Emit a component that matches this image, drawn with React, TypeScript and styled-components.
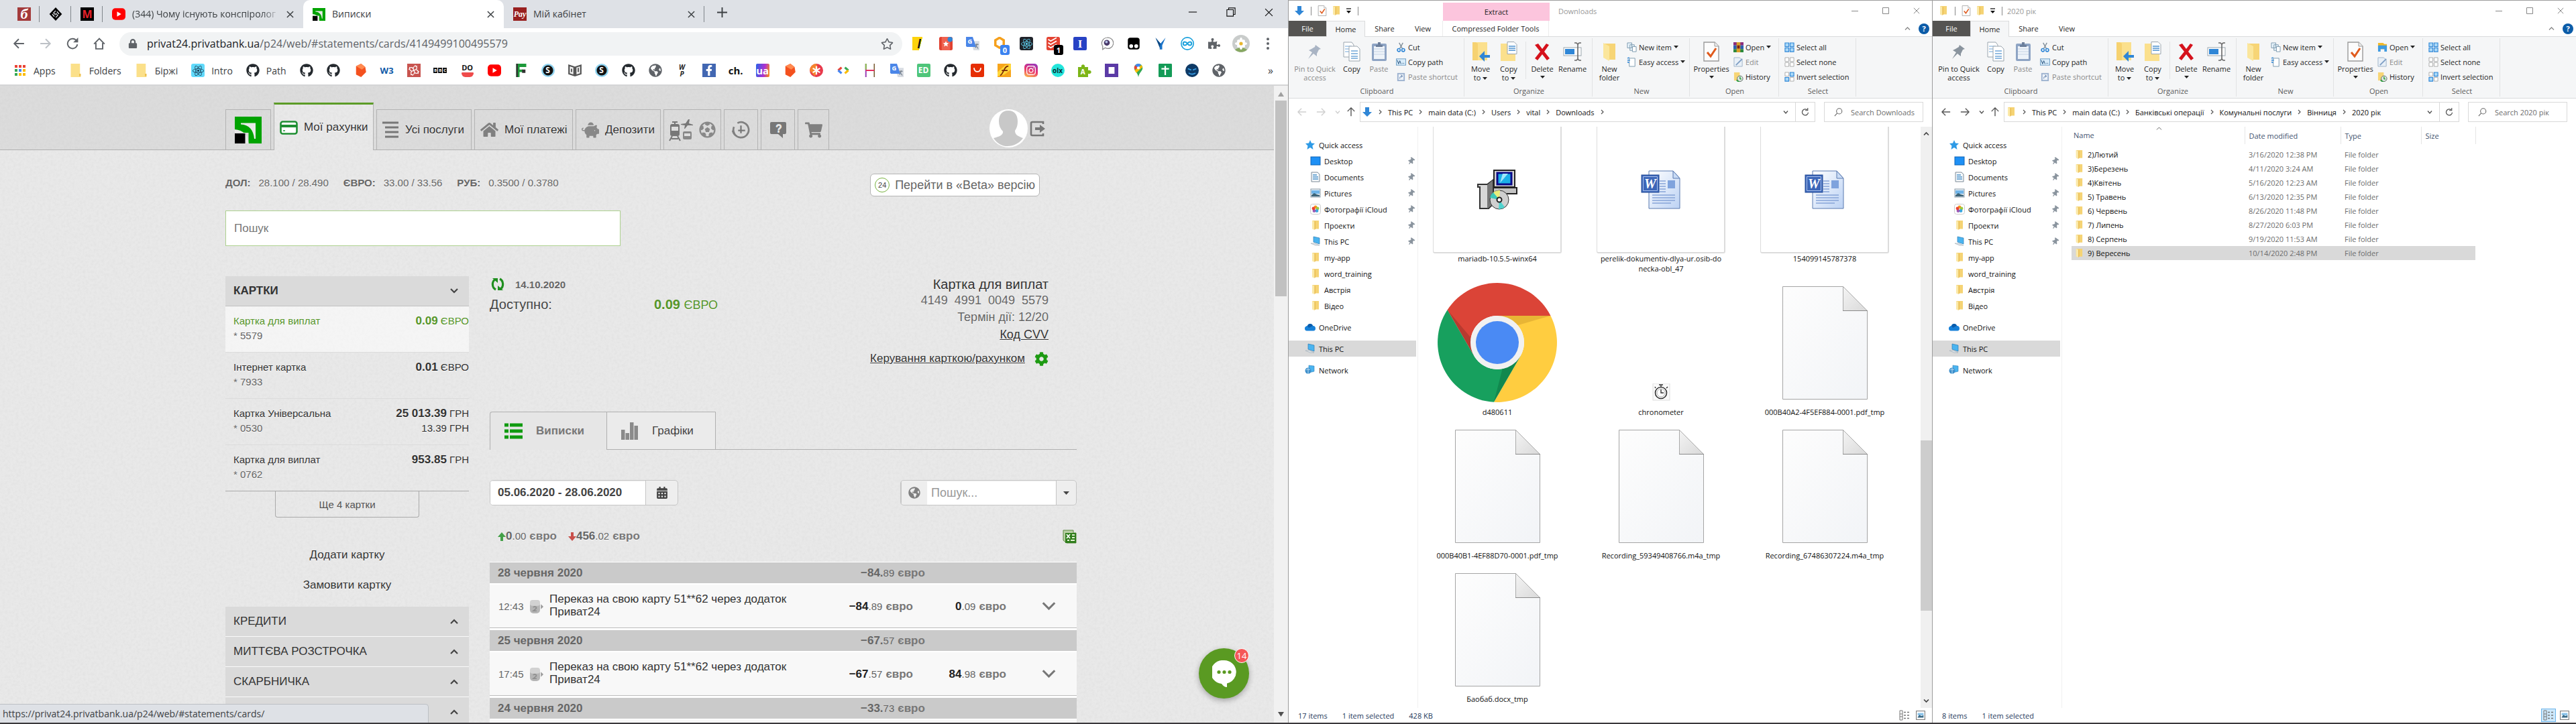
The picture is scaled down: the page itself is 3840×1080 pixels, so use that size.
import React from 'react';
import styled, { createGlobalStyle, css } from 'styled-components';
import { FaGithub, FaReact, FaFacebookF, FaInstagram, FaGlobeAmericas, FaCog, FaPuzzlePiece, FaRegStar, FaLock, FaCalendarAlt, FaThumbtack, FaFutbol, FaHome, FaPiggyBank, FaShoppingCart } from 'react-icons/fa';

const ui = '"Open Sans", "Noto Sans", sans-serif';
const web = '"Liberation Sans", Arial, sans-serif';

const grain = (seed: number) =>
  `url("data:image/svg+xml,%3Csvg xmlns='http://www.w3.org/2000/svg' width='300' height='300'%3E%3Cfilter id='n'%3E%3CfeTurbulence type='fractalNoise' baseFrequency='0.25' numOctaves='3' seed='${seed}' stitchTiles='stitch'/%3E%3CfeColorMatrix values='0 0 0 0 0.4 0 0 0 0 0.4 0 0 0 0 0.4 0.16 0 0 0 -0.05'/%3E%3C/filter%3E%3Crect width='300' height='300' filter='url(%23n)'/%3E%3C/svg%3E")`;

const GlobalStyle = createGlobalStyle`
  * { box-sizing: border-box; }
  body { margin: 0; background: #fff; font-family: ${ui}; }
  button { font: inherit; color: inherit; background: none; border: 0; padding: 0; margin: 0; cursor: pointer; }
  a { color: inherit; text-decoration: none; }
  input { font: inherit; color: inherit; outline: 0; margin: 0; }
  svg { display: block; flex: none; }
  ul { list-style: none; margin: 0; padding: 0; }
  h1, h2, p { margin: 0; font: inherit; }
`;

const Desktop = styled.div`
  display: grid;
  grid-template-columns: 2fr 1fr 1fr;
  height: 100vh;
  overflow: hidden;
  border-bottom: 2px solid #3a383b;
`;

/* ---------- shared glyphs ---------- */

type SvgProps = { w: number; h?: number; box?: string; children: React.ReactNode };
const G = ({ w, h, box, children }: SvgProps) => (
  <svg width={w} height={h ?? w} viewBox={box ?? '0 0 16 16'} fill="none" aria-hidden="true">{children}</svg>
);

const Folder = ({ s = 16 }: { s?: number }) => (
  <G w={s}>
    <path d="M3 1h10v12.5H6L3 12z" fill="#f5d374" />
    <path d="M3 1l3.5 1.6V15L3 13.4z" fill="#fbe9a9" />
    <path d="M6.5 2.6L8 2v11.5L6.5 15z" fill="#e9bd55" />
  </G>
);
const Cross = ({ s = 12, c = '#3c4043', t = 1.6 }: { s?: number; c?: string; t?: number }) => (
  <G w={s} box="0 0 12 12"><path d="M1 1l10 10M11 1L1 11" stroke={c} strokeWidth={t} /></G>
);
const DownArrow = () => (
  <G w={16}><path d="M5 1h6v7h4l-7 7-7-7h4z" fill="#2f86d6" /></G>
);
const CheckDoc = ({ w = 14, h = 16 }: { w?: number; h?: number }) => (
  <G w={w} h={h} box="0 0 24 30">
    <path d="M1 1h16l6 6v22H1z" fill="#fcfcfc" stroke="#9a9a9a" strokeWidth="1.4" />
    <path d="M17 1v6h6" stroke="#9a9a9a" fill="#eee" />
    <path d="M6 16l5 6 8-12" stroke="#e05a1c" strokeWidth="3" />
  </G>
);
const Monitor = () => (
  <G w={16}>
    <path d="M5 1l9 2v9l-9-3z" fill="#4ab4f0" stroke="#2b7db5" strokeWidth=".7" />
    <path d="M1 11l7 3 6 0-7-3z" fill="#dfe5ea" stroke="#9aa7b1" strokeWidth=".6" />
  </G>
);

/* ---------- browser ---------- */

const Browser = styled.section`
  display: flex;
  flex-direction: column;
  min-width: 0;
  min-height: 0;
  position: relative;
  background: #fff;
  color: #3c4043;
  font-size: 14px;
`;
const TabStrip = styled.div`
  display: flex;
  align-items: stretch;
  height: 42px;
  padding-left: 12px;
  background: #dee1e6;
`;
const Tab = styled.div<{ $active?: boolean; $pinned?: boolean; $rule?: boolean }>`
  display: flex;
  align-items: center;
  gap: 10px;
  width: ${p => (p.$pinned ? 47 : 299)}px;
  padding: 0 14px;
  ${p => p.$active && css`background: #fff; border-radius: 10px 10px 0 0;`}
  ${p => p.$rule && css`background: linear-gradient(#80868b, #80868b) right center / 1px 24px no-repeat;`}
`;
const TabTitle = styled.span<{ $fade?: boolean }>`
  flex: 1;
  min-width: 0;
  overflow: hidden;
  white-space: nowrap;
  line-height: 20px;
  ${p => p.$fade && css`-webkit-mask-image: linear-gradient(90deg, #000 88%, transparent);`}
`;
const StripButton = styled.button<{ $w: number; $push?: boolean }>`
  display: flex;
  align-items: center;
  justify-content: center;
  width: ${p => p.$w}px;
  height: 36px;
  margin-left: ${p => (p.$push ? 'auto' : 0)};
`;
const Chip = styled.span<{ $bg?: string; $c?: string; $s?: number; $r?: number; $serif?: boolean; $i?: boolean; $col?: boolean }>`
  display: inline-flex;
  flex: none;
  flex-direction: ${p => (p.$col ? 'column' : 'row')};
  align-items: center;
  justify-content: center;
  width: 20px;
  height: 20px;
  border-radius: ${p => p.$r ?? 0}px;
  background: ${p => p.$bg ?? 'transparent'};
  color: ${p => p.$c ?? '#fff'};
  font: ${p => (p.$i ? 'italic ' : '')}bold ${p => p.$s ?? 14}px/1 ${p => (p.$serif ? '"Liberation Serif", serif' : ui)};
  white-space: nowrap;
`;
const Toolbar = styled.div`
  display: flex;
  align-items: center;
  gap: 20px;
  height: 46px;
  padding: 0 20px 0 18px;
`;
const ToolButton = styled.button`
  display: flex;
  align-items: center;
  justify-content: center;
  width: 20px;
  height: 20px;
  flex: none;
  position: relative;
`;
const Badge = styled.span<{ $bg: string }>`
  position: absolute;
  left: 11px;
  top: 12px;
  min-width: 14px;
  border-radius: 3px;
  background: ${p => p.$bg};
  color: #fff;
  font: bold 11px/15px ${ui};
  text-align: center;
`;
const Omnibox = styled.div`
  display: flex;
  align-items: center;
  flex: 1;
  height: 35px;
  margin-right: -5px;
  padding: 0 13px;
  border-radius: 18px;
  background: #f1f3f4;
  color: #5f6368;
  font-size: 16px;
`;
const Address = styled.span`
  flex: 1;
  margin-left: 14px;
  white-space: nowrap;
  b { font-weight: 400; color: #202124; }
`;
const Bookmarks = styled.nav`
  display: flex;
  align-items: center;
  gap: 20px;
  height: 38px;
  padding: 0 22px 4px 20px;
  overflow: hidden;
`;
const Bookmark = styled.a`
  display: flex;
  align-items: center;
  gap: 10px;
  white-space: nowrap;
  flex: none;
`;
const More = styled.button`
  margin-left: auto;
  font-size: 16px;
`;
const Smile = styled.i`
  width: 18px;
  height: 7px;
  margin-top: 2px;
  border-radius: 2px 2px 9px 9px;
  background: #ef4b4b;
`;
const Block = styled.i`
  padding: 1px;
  margin-right: 1px;
  background: #111;
  font-style: normal;
`;

const RedStone = () => <G w={20}><path d="M3 3l6-3 5 4 1 6-6 6-6-3z" fill="#f4511e" /><path d="M9 0l5 4-4 3-7-4z" fill="#ff8a50" /></G>;
const YouTube = () => <G w={20}><rect y="1" width="16" height="14" rx="4" fill="#f00" /><path d="M6 5l5 3-5 3z" fill="#fff" /></G>;
const Translate = () => (
  <G w={20}>
    <path d="M6 5h10v11H9z" fill="#d8dce2" />
    <path d="M0 0h8l4 12H1L0 11z" fill="#4b86e8" />
    <text x="2" y="8" fontSize="7.5" fontWeight="bold" fill="#fff" fontFamily={ui}>G</text>
    <path d="M11 9h4M13 8v1c0 2-1 3-2 4M11.500 10l3 4" stroke="#6b7785" strokeWidth=".9" />
  </G>
);
const Globe = () => <FaGlobeAmericas size={20} color="#5f6368" />;
const Hub = () => <FaGithub size={20} color="#24292e" />;
const ReactTile = ({ bg, c }: { bg: string; c: string }) => <Chip $bg={bg} $r={3} $c={c}><FaReact size={17} /></Chip>;
const SMark = () => <Chip $bg="radial-gradient(circle, #111 0 7px, #8fd3f0 8px)" $r={10} $s={12}>S</Chip>;
const Green24 = ({ s }: { s: number }) => (
  <svg width={s} height={s} viewBox="0 0 40 40" aria-hidden="true">
    <path d="M0 0h40v40H20.500V24H0z" fill="#00a300" />
    <path d="M9 9.500h22V33h-2C28 20 21 12 9 11.500z" fill="#e9e9e9" />
    <path d="M0 19c13 1 20 9 20.500 21H15V24H0z" fill="#e9e9e9" />
    <path d="M0 25h15.500v15H0z" fill="#000" />
  </svg>
);
const Spiral = () => <G w={20}><rect width="16" height="16" fill="#c8544f" /><path d="M8 8c-2-3 0-6 4-5M8 8c3-2 6 0 5 4M8 8c2 3 0 6-4 5M8 8c-3 2-6 0-5-4M8 8C7 4 4 3 2 7M8 8c4-1 5-4 1-6M8 8c1 4 4 5 6 1M8 8c-4 1-5 4-1 6" stroke="#fff" strokeWidth=".9" /></G>;

const bookmarkIcons: React.ReactNode[] = [
  <Hub />,
  <Hub />,
  <RedStone />,
  <Chip $c="#0f5aa8" $s={13}>W3</Chip>,
  <Spiral />,
  <Chip $s={6}><Block>B</Block><Block>B</Block><Block>C</Block></Chip>,
  <Chip $c="#111" $s={11} $col>DO<Smile /></Chip>,
  <YouTube />,
  <G w={20}><path d="M2 0h12v4H6v3h4v3H6v6H2z" fill="#1d9a3a" /><path d="M2 0h2v16H2zM9 7h4v4H9z" fill="#333" /></G>,
  <SMark />,
  <G w={20}><path d="M1 2l6 2v10l-6-2zM15 2L9 4v10l6-2zM8 4v11" fill="#f5f5f5" stroke="#555" strokeWidth="1.800" /><path d="M4 6v4M12 5v5" stroke="#555" strokeWidth="1.500" /></G>,
  <SMark />,
  <Hub />,
  <Globe />,
  <Chip $c="#222" $s={10} $i $col><span>W</span><span>P</span></Chip>,
  <Chip $bg="#4267b2"><FaFacebookF size={16} /></Chip>,
  <Chip $c="#111" $s={15}>ch.</Chip>,
  <Chip $bg="linear-gradient(100deg,#2864e8,#b02fd0 60%,#ff9800)" $r={2} $s={15}>ua</Chip>,
  <RedStone />,
  <G w={20}><circle cx="8" cy="8" r="8" fill="#e83a4c" /><path d="M0 8a8 8 0 0 1 8-8l2 8-4 7z" fill="#f5852c" /><path d="M8 3v10M3.700 5.500l8.600 5M12.300 5.500l-8.600 5" stroke="#fff" strokeWidth="1.800" /></G>,
  <G w={20}><path d="M6 4.500L2 8" stroke="#ea4335" strokeWidth="2.600" /><path d="M2 8l4 3.500" stroke="#4285f4" strokeWidth="2.600" /><path d="M10 4.500L14 8" stroke="#34a853" strokeWidth="2.600" /><path d="M14 8l-4 3.500" stroke="#fbbc05" strokeWidth="2.600" /></G>,
  <G w={20}><path d="M3 0v16" stroke="#9b3fb5" strokeWidth="1.600" /><path d="M13 0v16" stroke="#7a5a30" strokeWidth="1.200" /><path d="M3 8h10" stroke="#e53060" strokeWidth="1.600" /><path d="M3 0v7" stroke="#8bc34a" strokeWidth="1.600" /></G>,
  <Translate />,
  <Chip $bg="#4fc57a" $r={2} $s={12}>ED</Chip>,
  <Hub />,
  <G w={20}><rect width="16" height="16" rx="2" fill="#e62e04" /><path d="M4 5c0 6 8 6 8 0" stroke="#fff" strokeWidth="1.500" /></G>,
  <G w={20}><rect width="16" height="16" fill="#f7a51c" /><path d="M0 10L9 2l7-2v7l-8 6-8 2z" fill="#ffd83a" /><path d="M3 14C7 13 8 2 13 3M5 8h7" stroke="#7b2a0a" strokeWidth="1.400" /></G>,
  <Chip $bg="linear-gradient(20deg,#fdc44a,#e8316f 50%,#8a3ac8)" $r={5}><FaInstagram size={16} /></Chip>,
  <Chip $bg="#23e5db" $r={10} $c="#0a2f35" $s={10}>olx</Chip>,
  <G w={20}><path d="M0 4h4c-1-4 5-4 4 0h4v4c5-1 5 5 0 4v4H0z" fill="#7cb518" /><text x="3" y="13" fontSize="8" fontWeight="bold" fill="#fff" fontFamily={ui}>A</text></G>,
  <G w={20}><rect width="16" height="16" fill="#5b3aa6" /><rect x="4.500" y="4" width="7" height="8" fill="#fff" /></G>,
  <G w={20}><path d="M8 0a5 5 0 0 0-5 5c0 4 4 5 5 11 1-6 5-7 5-11a5 5 0 0 0-5-5z" fill="#34a853" /><path d="M8 0a5 5 0 0 0-4 2l4 3 3-4z" fill="#4285f4" /><path d="M4 2a5 5 0 0 0-.5 5L8 5z" fill="#ea4335" /><path d="M11.500 1.500L3.500 8l2 3L13 4z" fill="#fbbc04" /><circle cx="8" cy="5" r="1.700" fill="#fff" /></G>,
  <G w={20}><rect width="16" height="16" rx="1" fill="#149b57" /><path d="M8 2.500v11M3.500 6h9" stroke="#fff" strokeWidth="1.800" /></G>,
  <G w={20}><circle cx="8" cy="8" r="8" fill="#0e3a66" /><path d="M3 6l4 1.500M13 6L9 7.500M4 11c2 2 6 2 8 0" stroke="#39a0e8" strokeWidth="1.400" /></G>,
  <Globe />,
];

const extensionIcons: { n: string; i: React.ReactNode }[] = [
  { n: 'Notes', i: <Chip $bg="linear-gradient(105deg,#fdd30c 60%,transparent 61%)" $c="#111" $i $s={17}>l</Chip> },
  { n: 'Star list', i: <G w={20}><rect width="16" height="16" rx="2" fill="#e0402f" /><rect x="3" y="0" width="10" height="16" fill="#ef6250" /><path d="M8 5l1 2.200 2.400.2L9.600 9l.6 2.500L8 10.200 5.800 11.500 6.400 9 4.600 7.400 7 7.200z" fill="#fff" /><circle cx="13" cy="3" r="3" fill="#2f86d6" /></G> },
  { n: 'Translate', i: <Translate /> },
  { n: 'Cube', i: <><G w={20}><path d="M8 1l5 3v6l-5 3-5-3V4z" stroke="#f5a01d" strokeWidth="2.800" /></G><Badge $bg="#3b82f0">0</Badge></> },
  { n: 'React tools', i: <ReactTile bg="#20232a" c="#61dafb" /> },
  { n: 'Tasks', i: <><G w={20}><rect width="16" height="16" rx="2" fill="#e44332" /><path d="M2 3l3 2 7-4M2 7l3 2 7-4M2 11l3 2 7-4" stroke="#fff" strokeWidth="1.400" /></G><Badge $bg="#000">1</Badge></> },
  { n: 'Reader', i: <Chip $bg="#2742c4" $r={2} $serif $s={17}>I</Chip> },
  { n: 'Chat', i: <G w={20}><path d="M8 1a6.500 6.500 0 1 1-2 12l-3 2V11A6.500 6.500 0 0 1 8 1z" fill="#fff" stroke="#888" /><circle cx="8" cy="7" r="3.500" fill="#4a3a6a" /><circle cx="7.500" cy="6" r="1.500" fill="#b7c4e8" /></G> },
  { n: 'Scripts', i: <G w={20}><rect x="1" y="1" width="14" height="14" rx="3" fill="#000" /><circle cx="5" cy="11" r="2.300" fill="#fff" /><circle cx="11" cy="11" r="2.300" fill="#fff" /></G> },
  { n: 'Pin', i: <G w={20}><path d="M2 1l6 7 6-7-4 9v5H7v-5z" fill="#1a73c8" /><path d="M2 1l6 7-1 5z" fill="#0c4a86" /></G> },
  { n: 'Loop', i: <G w={20}><circle cx="8" cy="8" r="7.300" stroke="#1ba1dc" strokeWidth="1.300" /><path d="M8 8c-2-3-5-2.500-5 0s3 3 5 0 5-2.500 5 0-3 3-5 0z" stroke="#1ba1dc" strokeWidth="1.600" /></G> },
  { n: 'Extensions', i: <FaPuzzlePiece size={18} color="#5f6368" /> },
  { n: 'Profile', i: <svg width="26" height="26" viewBox="0 0 26 26" aria-hidden="true"><circle cx="13" cy="13" r="13" fill="#c9cccb" /><path d="M4 22c6-4 12-4 18 0-5 5-13 5-18 0z" fill="#87a861" /><g fill="#fff"><ellipse cx="13" cy="8" rx="2" ry="4" /><ellipse cx="13" cy="18" rx="2" ry="4" /><ellipse cx="8" cy="13" rx="4" ry="2" /><ellipse cx="18" cy="13" rx="4" ry="2" /><circle cx="9.500" cy="9.500" r="2.500" /><circle cx="16.500" cy="9.500" r="2.500" /><circle cx="9.500" cy="16.500" r="2.500" /><circle cx="16.500" cy="16.500" r="2.500" /></g><circle cx="13" cy="13" r="2.600" fill="#e8b62c" /></svg> },
  { n: 'Menu', i: <G w={20}><g fill="#5f6368"><circle cx="8" cy="2.500" r="1.600" /><circle cx="8" cy="8" r="1.600" /><circle cx="8" cy="13.500" r="1.600" /></g></G> },
];

/* ---------- bank page ---------- */

const Viewport = styled.div`
  display: flex;
  flex: 1;
  min-height: 0;
  border-top: 2px solid #d4d5d6;
`;
const Page = styled.main`
  flex: 1;
  min-width: 0;
  overflow: hidden;
  background: #e9e9e9 ${grain(4)};
  color: #333;
  font-family: ${web};
  font-size: 17px;
  text-shadow: 0 1px 0 rgba(255, 255, 255, 0.8);
`;
const Scroll = styled.div`
  display: flex;
  flex-direction: column;
  align-items: center;
  width: 21px;
  padding: 9px 0;
  background: #f1f1f1;
`;
const Thumb = styled.div`
  width: 17px;
  height: 292px;
  margin: 6px 0 auto;
  background: #c1c1c1;
`;
const SiteHeader = styled.header`
  display: flex;
  align-items: flex-end;
  gap: 4px;
  height: 96px;
  padding: 0 340px 0 336px;
  border-bottom: 1px solid #b0b0b0;
  background: #dcdcdc ${grain(9)};
`;
const SiteTab = styled.a<{ $w: number; $active?: boolean; $tight?: boolean }>`
  display: flex;
  align-items: center;
  justify-content: ${p => (p.$tight ? 'center' : 'flex-start')};
  gap: 9px;
  width: ${p => p.$w}px;
  height: 60px;
  padding: ${p => (p.$tight ? 0 : '0 0 0 8px')};
  border: 1px solid #b3b3b3;
  border-bottom: 0;
  white-space: nowrap;
  ${p => p.$active && css`
    height: 71px;
    margin-bottom: -1px;
    border-top: 3px solid #5c9c27;
    background: #e9e9e9 ${grain(4)};
  `}
`;
const Account = styled.div`
  display: flex;
  align-items: center;
  gap: 3px;
  margin: 0 0 3px auto;
`;
const Content = styled.div`
  padding: 35px 294px 0 336px;
`;
const Rates = styled.div`
  display: flex;
  align-items: flex-start;
  justify-content: space-between;
  padding-right: 55px;
`;
const RateList = styled.dl`
  display: flex;
  margin: 0;
  font-size: 15px;
  line-height: 28px;
  color: #666;
  dt { font-weight: 700; margin-right: 12px; }
  dd { margin: 0 22px 0 0; }
`;
const BetaButton = styled.button`
  display: flex;
  align-items: center;
  gap: 8px;
  height: 34px;
  padding: 0 6px;
  border: 1px solid #b5b5b5;
  border-radius: 6px;
  background: #fff;
  color: #666;
  font-size: 18px;
`;
const Ring = styled.span`
  display: flex;
  align-items: center;
  justify-content: center;
  width: 22px;
  height: 22px;
  border: 1px solid #79b341;
  border-radius: 50%;
  color: #444;
  font-size: 11px;
`;
const BigSearch = styled.input`
  display: block;
  width: 589px;
  height: 53px;
  margin: 21px 0 45px;
  padding: 0 12px;
  border: 1px solid #add18f;
  background: #fff;
  font-size: 17px;
  &::placeholder { color: #777; }
`;
const Columns = styled.div`
  display: grid;
  grid-template-columns: 363px 1fr;
  gap: 31px;
`;
const SideHead = styled.button<{ $open?: boolean }>`
  display: flex;
  align-items: center;
  justify-content: space-between;
  width: 100%;
  height: 45px;
  padding: 0 16px 0 12px;
  border-bottom: 1px solid ${p => (p.$open ? '#c0c0c0' : '#fafafa')};
  background: #dadada;
  font-size: 17px;
  font-weight: ${p => (p.$open ? 700 : 400)};
  svg:only-child { margin-left: auto; }
`;
const CardRow = styled.li<{ $on?: boolean }>`
  display: flex;
  justify-content: space-between;
  height: 69px;
  padding: 11px 0 0 12px;
  border-bottom: 1px solid #dcdcdc;
  font-size: 15px;
  line-height: 22px;
  ${p => p.$on && css`background: rgba(255, 255, 255, 0.55); color: #56962a;`}
  &:last-child { border-color: #aaa; }
  span { color: #666; }
`;
const CardSum = styled.div`
  text-align: right;
  b { font-size: 17px; }
`;
const MoreCards = styled.button`
  display: block;
  width: 215px;
  height: 39px;
  margin: 0 auto 33px;
  border: 1px solid #aaa;
  border-top: 0;
  border-radius: 0 0 4px 4px;
  color: #555;
  font-size: 15px;
`;
const CardLink = styled.a`
  display: block;
  line-height: 45px;
  text-align: center;
`;
const SideSections = styled.div`
  margin-top: 10px;
`;
const Info = styled.div`
  display: flex;
  justify-content: space-between;
  min-height: 202px;
  padding-right: 42px;
`;
const Updated = styled.div`
  display: flex;
  align-items: center;
  gap: 16px;
  height: 24px;
  padding-left: 2px;
  font-size: 15px;
  font-weight: 700;
  color: #666;
`;
const Available = styled.div`
  display: grid;
  grid-template-columns: 245px auto;
  font-size: 20px;
  line-height: 36px;
  color: #444;
  strong, span { color: #56962a; }
  span { font-size: 18px; }
`;
const CardInfo = styled.div`
  display: flex;
  flex-direction: column;
  align-items: flex-end;
  font-size: 18px;
  line-height: 26px;
  color: #666;
  h2 { font-size: 20px; line-height: 24px; color: #333; }
  p:first-of-type { line-height: 24px; white-space: pre; }
  a { color: #333; text-decoration: underline; }
`;
const Manage = styled.div`
  display: flex;
  align-items: center;
  gap: 14px;
  margin-top: 10px;
  font-size: 17px;
`;
const ViewTabs = styled.div`
  display: flex;
  height: 57px;
  background: linear-gradient(#b0b0b0, #b0b0b0) bottom / 100% 1px no-repeat;
`;
const ViewTab = styled.button<{ $on?: boolean; $w: number }>`
  display: flex;
  align-items: center;
  gap: 20px;
  width: ${p => p.$w}px;
  padding-left: 21px;
  border: 1px solid #b0b0b0;
  background: #ebebeb;
  color: ${p => (p.$on ? '#777' : '#444')};
  font-weight: ${p => (p.$on ? 700 : 400)};
  ${p => p.$on && css`border-width: 1px 0 0 1px; border-radius: 4px 0 0 0; background: #e6e6e6;`}
`;
const Filters = styled.div`
  display: flex;
  justify-content: space-between;
  margin: 45px 0 34px;
`;
const InputGroup = styled.div`
  display: flex;
  height: 38px;
  border: 1px solid #c6c6c6;
  border-radius: 5px;
  background: #eee;
  overflow: hidden;
`;
const GroupField = styled.input<{ $w: number; $bold?: boolean }>`
  width: ${p => p.$w}px;
  border: 0;
  padding: 0 ${p => (p.$bold ? 11 : 6)}px;
  background: #fff;
  box-shadow: inset 0 1px 1px rgba(0, 0, 0, 0.08);
  color: #444;
  font-weight: ${p => (p.$bold ? 700 : 400)};
  font-size: ${p => (p.$bold ? 17 : 18)}px;
  &::placeholder { color: #999; }
`;
const GroupButton = styled.button<{ $w: number }>`
  display: flex;
  align-items: center;
  justify-content: center;
  width: ${p => p.$w}px;
  border-left: 1px solid #c6c6c6;
`;
const Totals = styled.div`
  display: flex;
  align-items: center;
  gap: 17px;
  height: 24px;
  margin-bottom: 26px;
  padding-left: 12px;
  > svg { margin-left: auto; }
`;
const Total = styled.span`
  display: flex;
  align-items: center;
`;
const Money = styled.span<{ $dark?: boolean }>`
  white-space: nowrap;
  color: #777;
  b { color: ${p => (p.$dark ? '#222' : '#666')}; }
  small { font-size: 15px; color: #666; }
  strong { margin-left: 5px; }
`;
const Ledger = styled.table`
  width: 100%;
  table-layout: fixed;
  border-collapse: separate;
  border-spacing: 0;
  border-top: 1px solid #fff;
  text-shadow: none;
  td, th { padding: 0; text-align: left; }
`;
const DayRow = styled.tr`
  th, td {
    height: 33px;
    border-bottom: 2px solid #fff;
    background: #cacaca;
    color: #666;
  }
  th { padding-left: 12px; }
  td { padding-left: 42px; }
`;
const EntryRow = styled.tr`
  td {
    height: 68px;
    border-bottom: 3px solid #fff;
    background: #f8f8f8;
    box-shadow: inset 0 -1px 0 #bdbdbd;
    line-height: 19px;
  }
  td:first-child { padding-left: 13px; font-size: 15px; color: #666; }
  td:nth-child(3) { padding: 0 20px 3px 0; }
  td:nth-child(4), td:nth-child(5) { text-align: right; }
  td:nth-child(6) { padding-left: 53px; }
`;
const ChatButton = styled.button`
  position: absolute;
  right: 58px;
  bottom: 36px;
  display: flex;
  align-items: center;
  justify-content: center;
  width: 75px;
  height: 75px;
  border-radius: 50%;
  background: #5a9a22;
  box-shadow: 0 3px 8px rgba(0, 0, 0, 0.3);
`;
const ChatCount = styled.span`
  position: absolute;
  right: 0;
  top: 0;
  width: 22px;
  height: 22px;
  border: 1px solid #fff;
  border-radius: 50%;
  background: #f55757;
  color: #fff;
  font: 13px/20px ${ui};
  text-align: center;
`;
const StatusBubble = styled.div`
  position: absolute;
  left: 0;
  bottom: 0;
  width: 639px;
  height: 28px;
  padding-left: 4px;
  border: 1px solid #bcc0c5;
  border-width: 1px 1px 0 0;
  border-radius: 0 5px 0 0;
  background: #dee1e6;
  color: #3c4043;
  font-size: 14px;
  line-height: 27px;
`;

const Chevron = ({ up, s = 12 }: { up?: boolean; s?: number }) => (
  <G w={s} box="0 0 12 12"><path d={up ? 'M1 9l5-5 5 5' : 'M1 3l5 5 5-5'} stroke={s > 14 ? '#777' : '#444'} strokeWidth={s > 14 ? 1.8 : 2.2} /></G>
);
const CoinOut = () => (
  <G w={20}>
    <rect x="0" y="2" width="12" height="14" rx="4" fill="#b5b5b5" />
    <rect x="0" y="0" width="12" height="7" rx="3" fill="#d2d2d2" />
    <path d="M4 9c1-2 4-1 3.500 1L4 13h4" stroke="#8e8e8e" strokeWidth="1.300" />
    <path d="M13 5l3 3-3 3z" fill="#999" />
  </G>
);

const cards = [
  { name: 'Картка для виплат', no: '* 5579', sum: '0.09', cur: 'ЄВРО', on: true },
  { name: 'Інтернет картка', no: '* 7933', sum: '0.01', cur: 'ЄВРО' },
  { name: 'Картка Універсальна', no: '* 0530', sum: '25 013.39', cur: 'ГРН', own: '13.39 ГРН' },
  { name: 'Картка для виплат', no: '* 0762', sum: '953.85', cur: 'ГРН' },
];
const days = [
  { day: '28 червня 2020', sum: ['−84.', '89'], entry: { time: '12:43', out: ['−84', '.89'], left: ['0', '.09'] } },
  { day: '25 червня 2020', sum: ['−67.', '57'], entry: { time: '17:45', out: ['−67', '.57'], left: ['84', '.98'] } },
  { day: '24 червня 2020', sum: ['−33.', '73'] },
];
const Sum = ({ v, dark }: { v: string[]; dark?: boolean }) => (
  <Money $dark={dark}><b>{v[0]}</b><small>{v[1]}</small><strong>євро</strong></Money>
);

const BankPage = () => (
  <Page>
    <SiteHeader>
      <SiteTab href="#home" $w={68} $tight aria-label="Приват24"><Green24 s={40} /></SiteTab>
      <SiteTab href="#accounts" $w={149} $active>
        <G w={27} h={21} box="0 0 27 21"><rect x="1.500" y="1.500" width="24" height="18" rx="3" fill="#fff" stroke="#1f8f33" strokeWidth="2.600" /><path d="M1 6h25v4H1z" fill="#1f8f33" /><path d="M5 15h3" stroke="#1f8f33" strokeWidth="1.500" /></G>
        Мої рахунки
      </SiteTab>
      <SiteTab href="#services" $w={142}>
        <G w={25} box="0 0 25 25"><path d="M0 2h24M4 9h20M4 16h20M4 23h20" stroke="#777" strokeWidth="2.800" /></G>
        Усі послуги
      </SiteTab>
      <SiteTab href="#payments" $w={147}><FaHome size={27} color="#808080" />Мої платежі</SiteTab>
      <SiteTab href="#deposits" $w={127}><FaPiggyBank size={26} color="#888" />Депозити</SiteTab>
      <SiteTab href="#tickets" $w={86} $tight aria-label="Квитки">
        <G w={36} h={34} box="0 0 36 34">
          <rect x="2" y="8" width="14" height="18" rx="3" fill="#777" /><path d="M4 12h10v6H4z" fill="#ddd" />
          <path d="M5 26l-4 7M13 26l4 7M4 30h10M9 8V5M5 5h8" stroke="#777" strokeWidth="2" />
          <path d="M18 8l7-1 4-6 2 0-1 6 6 2v1l-8 0-4 5h-1l1-5-6-1z" fill="#777" />
          <rect x="21" y="19" width="13" height="12" rx="2" fill="#888" /><path d="M23 22h9v4h-9zM23 31h2v2h-2zM30 31h2v2h-2z" fill="#ddd" />
        </G>
        <FaFutbol size={25} color="#888" />
      </SiteTab>
      <SiteTab href="#history" $w={51} $tight aria-label="Архів">
        <G w={27} box="0 0 26 26"><path d="M8 3.500a11 11 0 1 1-5 5.500M1 14c1 4 3 7 6 8" stroke="#808080" strokeWidth="2.600" /><path d="M13 7v7h6M9 14h4v4" stroke="#777" strokeWidth="2.200" /></G>
      </SiteTab>
      <SiteTab href="#help" $w={51} $tight aria-label="Допомога">
        <G w={26} box="0 0 26 26"><path d="M3 1h20q2 0 2 2v14q0 2-2 2h-3v6l-7-6H3q-2 0-2-2V3q0-2 2-2z" fill="#777" /><text x="9" y="16" fontSize="16" fontWeight="bold" fill="#e6e6e6" fontFamily={web}>?</text></G>
      </SiteTab>
      <SiteTab href="#cart" $w={47} $tight aria-label="Кошик"><FaShoppingCart size={26} color="#808080" /></SiteTab>
      <Account>
        <svg width="57" height="57" viewBox="0 0 57 57" aria-hidden="true"><circle cx="28.500" cy="28.500" r="28.500" fill="#fff" /><path d="M28 2c10 0 14 7 14 16 0 7-2 11-4 14 0 6 4 8 12 11-9 13-32 19-44 0 9-2 15-5 14-10-4-4-6-9-6-15 0-9 4-16 14-16z" fill="#c8c8c8" /></svg>
        <button aria-label="Вихід"><G w={24} box="0 0 24 24"><path d="M20 5V2H4Q2 2 2 4v16q0 2 2 2h16v-3" stroke="#777" strokeWidth="2.600" /><path d="M8 10h7V6l8 6-8 6v-4H8z" fill="#777" /></G></button>
      </Account>
    </SiteHeader>
    <Content>
      <Rates>
        <RateList>
          <dt>ДОЛ:</dt><dd>28.100 / 28.490</dd>
          <dt>ЄВРО:</dt><dd>33.00 / 33.56</dd>
          <dt>РУБ:</dt><dd>0.3500 / 0.3780</dd>
        </RateList>
        <BetaButton><Ring>24</Ring>Перейти в «Beta» версію</BetaButton>
      </Rates>
      <BigSearch type="search" placeholder="Пошук" aria-label="Пошук" />
      <Columns>
        <aside>
          <SideHead $open>КАРТКИ<Chevron /></SideHead>
          <ul>
            {cards.map(c => (
              <CardRow key={c.no} $on={c.on}>
                <div>{c.name}<br /><span>{c.no}</span></div>
                <CardSum><b>{c.sum}</b> {c.cur}{c.own && <><br />{c.own}</>}</CardSum>
              </CardRow>
            ))}
          </ul>
          <MoreCards>Ще 4 картки</MoreCards>
          <CardLink href="#add">Додати картку</CardLink>
          <CardLink href="#order">Замовити картку</CardLink>
          <SideSections>
            {['КРЕДИТИ', 'МИТТЄВА РОЗСТРОЧКА', 'СКАРБНИЧКА'].map(t => <SideHead key={t}>{t}<Chevron up /></SideHead>)}
            <SideHead aria-label="Розгорнути"><Chevron up /></SideHead>
          </SideSections>
        </aside>
        <section>
          <Info>
            <div>
              <Updated>
                <G w={20} box="0 0 20 20"><path d="M7 18C1 15 1 6 6 3M13 2c6 3 6 12 1 15" stroke="#1f8f1f" strokeWidth="3.200" /><path d="M2 1h8v7zM18 19h-8v-7z" fill="#1f8f1f" /></G>
                14.10.2020
              </Updated>
              <Available>Доступно: <div><strong>0.09</strong> <span>ЄВРО</span></div></Available>
            </div>
            <CardInfo>
              <h2>Картка для виплат</h2>
              <p>4149  4991  0049  5579</p>
              <p>Термін дії: 12/20</p>
              <a href="#cvv">Код CVV</a>
              <Manage><a href="#manage">Керування карткою/рахунком</a><FaCog size={21} color="#1d9a12" /></Manage>
            </CardInfo>
          </Info>
          <ViewTabs>
            <ViewTab $w={174} $on>
              <G w={27} h={24} box="0 0 27 24"><path d="M0 3h6M8 3h19M0 12h6M8 12h19M0 21h6M8 21h19" stroke="#0f9a0f" strokeWidth="5" /></G>Виписки
            </ViewTab>
            <ViewTab $w={163}>
              <G w={26} box="0 0 26 26"><path d="M0 11h5.500v15H0zM6.500 16H12v10H6.500zM13 0h5.500v26H13zM19.500 5H25v21h-5.500z" fill="#8a8a8a" /></G>Графіки
            </ViewTab>
          </ViewTabs>
          <Filters>
            <InputGroup>
              <GroupField $w={231} $bold defaultValue="05.06.2020 - 28.06.2020" aria-label="Період" />
              <GroupButton $w={48} aria-label="Календар"><FaCalendarAlt size={18} color="#444" /></GroupButton>
            </InputGroup>
            <InputGroup>
              <GroupButton $w={39} aria-label="Тип пошуку"><FaGlobeAmericas size={18} color="#808080" /></GroupButton>
              <GroupField $w={192} placeholder="Пошук..." aria-label="Пошук операцій" />
              <GroupButton $w={30} aria-label="Параметри пошуку"><G w={9} h={5} box="0 0 9 5"><path d="M0 0h9L4.500 5z" fill="#444" /></G></GroupButton>
            </InputGroup>
          </Filters>
          <Totals>
            <Total><G w={12} h={13} box="0 0 12 13"><path d="M6 0l6 7H8v6H4V7H0z" fill="#43a047" /></G><Sum v={['0', '.00']} /></Total>
            <Total><G w={12} h={13} box="0 0 12 13"><path d="M6 13L0 6h4V0h4v6h4z" fill="#c9504a" /></G><Sum v={['456', '.02']} /></Total>
            <G w={21} box="0 0 21 21"><path d="M1 1h15v4h4v15H6l-5-4z" fill="#b9cfa5" stroke="#5c8a43" /><rect x="4" y="5" width="16" height="15" fill="#2f7d1b" /><path d="M6 7l5 6M11 7l-5 6" stroke="#fff" strokeWidth="1.800" /><path d="M14 8h4M14 12h4M7 16h3M12 16h6" stroke="#dff0d0" strokeWidth="2" /></G>
          </Totals>
          <Ledger>
            <colgroup>
              <col width="60" /><col width="29" /><col /><col width="120" /><col width="139" /><col width="105" />
            </colgroup>
            {days.map(({ day, sum, entry }) => (
              <tbody key={day}>
                <DayRow><th colSpan={3} scope="rowgroup">{day}</th><td colSpan={3}><Sum v={sum} /></td></DayRow>
                <EntryRow>
                  {entry ? (
                    <>
                      <td>{entry.time}</td>
                      <td><CoinOut /></td>
                      <td>Переказ на свою карту 51**62 через додаток Приват24</td>
                      <td><Sum v={entry.out} dark /></td>
                      <td><Sum v={entry.left} dark /></td>
                      <td><Chevron s={21} /></td>
                    </>
                  ) : <td colSpan={6} />}
                </EntryRow>
              </tbody>
            ))}
          </Ledger>
        </section>
      </Columns>
    </Content>
  </Page>
);

const Chrome = () => (
  <Browser aria-label="Браузер">
    <TabStrip>
      <Tab $pinned $rule><Chip $bg="#a33a3a" $serif $i $s={22}>б</Chip></Tab>
      <Tab $pinned $rule><G w={20}><path d="M8 0l7.500 8L8 16 .5 8z" fill="#000" /><path d="M8 4L5.500 6.500 8 9M8 12l2.500-2.500L8 7M4 8l2.500 3M12 8L9.500 5" stroke="#dee1e6" strokeWidth="1" /></G></Tab>
      <Tab $pinned $rule><Chip $bg="#000" $c="#e5202a" $s={16}>M</Chip></Tab>
      <Tab><YouTube /><TabTitle $fade>(344) Чому існують конспіролог</TabTitle><button aria-label="Закрити"><Cross s={11} /></button></Tab>
      <Tab $active><Green24 s={19} /><TabTitle>Виписки</TabTitle><button aria-label="Закрити"><Cross s={11} /></button></Tab>
      <Tab $rule><Chip $bg="#98201f" $serif $i $s={12}>Pay</Chip><TabTitle>Мій кабінет</TabTitle><button aria-label="Закрити"><Cross s={11} /></button></Tab>
      <StripButton $w={52} aria-label="Нова вкладка"><G w={15}><path d="M8 0v16M0 8h16" stroke="#3c4043" strokeWidth="2" /></G></StripButton>
      <StripButton $w={57} $push aria-label="Згорнути"><G w={14}><path d="M1 8h14" stroke="#111" strokeWidth="1.300" /></G></StripButton>
      <StripButton $w={57} aria-label="Розгорнути"><G w={14}><path d="M1 4h11v11H1zM4 4V1h11v11h-3" stroke="#111" strokeWidth="1.300" /></G></StripButton>
      <StripButton $w={57} aria-label="Закрити вікно"><Cross s={13} c="#111" t={1.1} /></StripButton>
    </TabStrip>
    <Toolbar>
      <ToolButton aria-label="Назад"><G w={18}><path d="M15 8H2M8 2L2 8l6 6" stroke="#5f6368" strokeWidth="1.700" /></G></ToolButton>
      <ToolButton aria-label="Вперед"><G w={18}><path d="M1 8h13M8 2l6 6-6 6" stroke="#bdc1c6" strokeWidth="1.700" /></G></ToolButton>
      <ToolButton aria-label="Оновити"><G w={18}><path d="M13.500 4.500A6.500 6.500 0 1 0 14.500 9" stroke="#5f6368" strokeWidth="1.700" /><path d="M15.500 0v6.500H9z" fill="#5f6368" /></G></ToolButton>
      <ToolButton aria-label="Додому"><G w={18}><path d="M1 8.500L8 1.500l7 7M3.500 7v8h9V7" stroke="#5f6368" strokeWidth="1.700" /></G></ToolButton>
      <Omnibox>
        <FaLock size={14} color="#5f6368" />
        <Address><b>privat24.privatbank.ua</b>/p24/web/#statements/cards/4149499100495579</Address>
        <FaRegStar size={19} color="#5f6368" />
      </Omnibox>
      {extensionIcons.map(e => <ToolButton key={e.n} aria-label={e.n}>{e.i}</ToolButton>)}
    </Toolbar>
    <Bookmarks>
      <Bookmark href="#apps"><G w={20} box="-2 -2 20 20"><path d="M0 0h4v4H0zM6 0h4v4H6zM12 0h4v4h-4z" fill="#ea4335" /><path d="M0 6h4v4H0zM0 12h4v4H0z" fill="#34a853" /><path d="M6 6h4v4H6z" fill="#4285f4" /><path d="M12 6h4v4h-4zM6 12h4v4H6zM12 12h4v4h-4z" fill="#fbbc05" /></G>Apps</Bookmark>
      <Bookmark href="#folders"><G w={20}><path d="M2 0h11v13l1 3H2z" fill="#fbe08a" /><path d="M12 12h2v3h-2z" fill="#eebf4d" /></G>Folders</Bookmark>
      <Bookmark href="#exchanges"><G w={20}><path d="M2 0h11v13l1 3H2z" fill="#fbe08a" /><path d="M12 12h2v3h-2z" fill="#eebf4d" /></G>Біржі</Bookmark>
      <Bookmark href="#intro"><ReactTile bg="#61dafb" c="#16324a" />Intro</Bookmark>
      <Bookmark href="#path"><Hub />Path</Bookmark>
      {bookmarkIcons.map((icon, i) => <Bookmark key={i} href="#bookmark" aria-label={`Закладка ${i + 1}`}>{icon}</Bookmark>)}
      <More aria-label="Інші закладки">»</More>
    </Bookmarks>
    <Viewport>
      <BankPage />
      <Scroll>
        <G w={9} h={7} box="0 0 9 7"><path d="M4.500 0L9 7H0z" fill="#a0a0a0" /></G>
        <Thumb />
        <G w={9} h={7} box="0 0 9 7"><path d="M0 0h9L4.500 7z" fill="#505050" /></G>
      </Scroll>
    </Viewport>
    <ChatButton aria-label="Чат">
      <svg width="36" height="40" viewBox="0 0 36 40" aria-hidden="true"><path d="M18 0a18 17.500 0 0 1 4 34.500L22 40c-3 0-6-2-8-5A18 17.500 0 0 1 18 0z" fill="#fff" /><g fill="#5a9a22"><circle cx="10" cy="17.500" r="2.600" /><circle cx="18" cy="17.500" r="2.600" /><circle cx="26" cy="17.500" r="2.600" /></g></svg>
      <ChatCount>14</ChatCount>
    </ChatButton>
    <StatusBubble>https://privat24.privatbank.ua/p24/web/#statements/cards/</StatusBubble>
  </Browser>
);

/* ---------- file manager ---------- */

const Win = styled.section`
  display: flex;
  flex-direction: column;
  min-width: 0;
  min-height: 0;
  border: 1px solid #9c9c9c;
  border-width: 1px 0 0 1px;
  background: #fff;
  color: #1e1e1e;
  font-size: 11px;
  line-height: 15px;
`;
const TitleBar = styled.div`
  display: flex;
  align-items: center;
  height: 30px;
  padding-left: 8px;
`;
const QuickTools = styled.div`
  display: flex;
  align-items: center;
  gap: 6px;
`;
const Rule = styled.span`
  width: 1px;
  height: 13px;
  margin: 0 3px;
  background: #888;
`;
const ContextTab = styled.div`
  align-self: flex-end;
  width: 159px;
  height: 27px;
  margin-left: 123px;
  background: #fcc5dd;
  line-height: 27px;
  text-align: center;
`;
const WinTitle = styled.h1<{ $wide?: boolean }>`
  flex: 1;
  margin-left: ${p => (p.$wide ? 13 : 4)}px;
  color: #999;
`;
const WinButton = styled.button`
  display: flex;
  align-items: center;
  justify-content: center;
  width: 46px;
  height: 28px;
`;
const RibbonTabs = styled.div`
  display: flex;
  height: 24px;
  border-bottom: 1px solid #dadbdc;
`;
const RibbonTab = styled.button<{ $w: number; $kind?: 'file' | 'on' }>`
  width: ${p => p.$w}px;
  ${p => p.$kind === 'file' && css`background: #555452; color: #fff;`}
  ${p => p.$kind === 'on' && css`
    margin-bottom: -1px;
    border: 1px solid #dadbdc;
    border-bottom: 0;
    background: #f5f6f7;
  `}
`;
const ToolsTab = styled(RibbonTab)`
  border: 1px solid #ececec;
  border-width: 0 1px;
`;
const RibbonSide = styled.div`
  display: flex;
  align-items: center;
  gap: 12px;
  margin-left: auto;
  padding-right: 4px;
`;
const HelpDot = styled.button`
  width: 16px;
  height: 16px;
  border-radius: 50%;
  background: #0c5ca8;
  color: #fff;
  font-weight: 700;
  line-height: 16px;
`;
const Ribbon = styled.div`
  display: flex;
  height: 92px;
  padding: 2px 0;
  border-bottom: 1px solid #dadbdc;
  background: #f5f6f7;
`;
const RibbonGroup = styled.div<{ $w: number }>`
  display: flex;
  flex-direction: column;
  justify-content: space-between;
  width: ${p => p.$w}px;
  flex: none;
  padding: 2px 0 0 2px;
  border-right: 1px solid #e2e3e4;
`;
const GroupRow = styled.div`
  display: flex;
  align-items: flex-start;
`;
const GroupName = styled.div`
  color: #5c5c5c;
  line-height: 17px;
  text-align: center;
`;
const BigButton = styled.button<{ $w: number; $off?: boolean }>`
  display: flex;
  flex-direction: column;
  align-items: center;
  gap: 4px;
  width: ${p => p.$w}px;
  padding-top: 3px;
  color: ${p => (p.$off ? '#8a8a8a' : 'inherit')};
  line-height: 13px;
  white-space: nowrap;
`;
const SmallList = styled.div<{ $pad?: number }>`
  display: flex;
  flex-direction: column;
  padding-left: ${p => p.$pad ?? 3}px;
`;
const SmallButton = styled.button<{ $off?: boolean }>`
  display: flex;
  align-items: center;
  gap: 3px;
  height: 22px;
  color: ${p => (p.$off ? '#8a8a8a' : 'inherit')};
  white-space: nowrap;
`;
const Divider = styled.span`
  width: 1px;
  height: 56px;
  margin: 3px 0 0 5px;
  background: #e2e3e4;
`;
const AddressRow = styled.div`
  display: flex;
  align-items: center;
  height: 42px;
  padding: 0 13px 2px 10px;
`;
const NavButton = styled.button<{ $w: number }>`
  display: flex;
  align-items: center;
  justify-content: center;
  width: ${p => p.$w}px;
  height: 22px;
`;
const Crumbs = styled.div`
  display: flex;
  align-items: center;
  gap: 9px;
  flex: 1;
  height: 30px;
  padding-left: 2px;
  border: 1px solid #d9d9d9;
  color: #111;
  white-space: nowrap;
`;
const CrumbEnd = styled.div`
  display: flex;
  align-items: center;
  align-self: stretch;
  margin-left: auto;
`;
const CrumbButton = styled.button<{ $ruled?: boolean }>`
  display: flex;
  align-items: center;
  justify-content: center;
  width: 29px;
  height: 100%;
  border-left: ${p => (p.$ruled ? 1 : 0)}px solid #d9d9d9;
`;
const FindBox = styled.label`
  display: flex;
  align-items: center;
  gap: 12px;
  width: 148px;
  height: 30px;
  margin-left: 13px;
  padding-left: 14px;
  border: 1px solid #d9d9d9;
  input { width: 104px; border: 0; padding: 0; }
  input::placeholder { color: #6d6d6d; }
`;
const Body = styled.div`
  display: flex;
  flex: 1;
  min-height: 0;
`;
const Tree = styled.nav`
  width: 193px;
  flex: none;
  padding: 15px 2px 0 0;
  border-right: 1px solid #f0f0f0;
`;
const TreeItem = styled.a<{ $root?: boolean; $on?: boolean; $gap?: boolean }>`
  display: flex;
  align-items: center;
  gap: 5px;
  height: 24px;
  margin-top: ${p => (p.$gap ? 8 : 0)}px;
  padding: 0 2px 0 ${p => (p.$root ? 24 : 32)}px;
  background: ${p => (p.$on ? '#d9d9d9' : 'transparent')};
  color: #111;
  white-space: nowrap;
  > svg:nth-of-type(2) { margin-left: auto; }
`;
const Pane = styled.div`
  flex: 1;
  min-width: 0;
  overflow: hidden;
`;
const Tiles = styled.ul`
  display: grid;
  grid-template-columns: repeat(3, 192px);
  justify-content: start;
  gap: 0 52px;
  padding-left: 22px;
`;
const Tile = styled.li`
  display: flex;
  flex-direction: column;
  padding-bottom: 7px;
  text-align: center;
  white-space: pre;
  color: #111;
`;
const Preview = styled.div<{ $framed?: boolean; $low?: boolean }>`
  display: flex;
  align-items: ${p => (p.$low ? 'flex-end' : 'center')};
  justify-content: center;
  height: ${p => (p.$framed ? 189 : 192)}px;
  padding-bottom: ${p => (p.$low ? 9 : 0)}px;
  ${p => p.$framed && css`border: 1px solid #dcdcdc; border-width: 0 2px 2px 1px; border-radius: 0 0 3px 3px;`}
`;
const ExplorerScroll = styled.div`
  display: flex;
  flex-direction: column;
  align-items: center;
  width: 17px;
  padding: 6px 0;
  background: #f0f0f0;
`;
const ExplorerThumb = styled.div`
  width: 17px;
  height: 254px;
  margin: auto 0 130px;
  background: #cdcdcd;
`;
const Files = styled.table`
  width: 602px;
  margin-left: 14px;
  table-layout: fixed;
  border-collapse: collapse;
  th {
    height: 26px;
    padding: 0 0 0 6px;
    border-right: 1px solid #e5e5e5;
    color: #44546f;
    font-weight: 400;
    text-align: left;
  }
  th:first-child { padding-left: 3px; }
  tbody::before { content: ''; display: block; height: 5px; }
  td { height: 21px; padding: 0 0 0 6px; color: #6d6d6d; }
  td:first-child { padding-left: 4px; color: #111; }
`;
const FileRow = styled.tr<{ $on?: boolean }>`
  background: ${p => (p.$on ? '#d9d9d9' : 'transparent')};
`;
const FileName = styled.span`
  display: flex;
  align-items: center;
  gap: 5px;
`;
const NameHead = styled.span`
  display: block;
  position: relative;
  line-height: 26px;
`;
const SortMark = styled.span`
  position: absolute;
  top: 0;
  left: 123px;
`;
const StatusBar = styled.footer`
  display: flex;
  align-items: center;
  gap: 22px;
  height: 22px;
  padding: 0 6px 0 14px;
  color: #1e395b;
`;
const ViewSwitch = styled.div`
  display: flex;
  gap: 2px;
  margin-left: auto;
`;
const ViewButton = styled.button<{ $on?: boolean }>`
  display: flex;
  align-items: center;
  justify-content: center;
  width: 22px;
  height: 20px;
  background: ${p => (p.$on ? '#cde8fb' : 'transparent')};
  box-shadow: ${p => (p.$on ? 'inset 0 0 0 1px #6cb5ea' : 'none')};
`;
const CaretBox = styled.i`
  display: inline-block;
  vertical-align: middle;
`;

const Caret = () => <G w={7} h={4} box="0 0 7 4"><path d="M0 0h7L3.500 4z" fill="#222" /></G>;
const InlineCaret = () => <CaretBox><Caret /></CaretBox>;
const Tick = ({ c = '#555' }: { c?: string }) => <G w={8} box="0 0 8 8"><path d="M1 2.500L4 6l3-3.500" stroke={c} strokeWidth="1.400" /></G>;
const Sep = () => <G w={5} h={8} box="0 0 5 8"><path d="M1 1l3 3-3 3" stroke="#555" strokeWidth="1.200" /></G>;
const SmallPages = () => <G w={15} box="0 0 16 16"><path d="M1 1h7v8H1zM5 4h7v9H5z" fill="#e8f4fb" stroke="#7a97ad" /><path d="M9 7h6v8H9z" fill="#fff" stroke="#7a97ad" /></G>;

const BlankPage = () => (
  <svg width="127" height="169" viewBox="0 0 127 169" aria-hidden="true">
    <defs>
      <linearGradient id="paper" x1="0" y1="0" x2="1" y2="1"><stop offset="0" stopColor="#fdfdfd" /><stop offset="1" stopColor="#f2f4f7" /></linearGradient>
      <linearGradient id="curl" x1="0" y1="0" x2="1" y2="1"><stop offset="0" stopColor="#f4f4f4" /><stop offset="1" stopColor="#d9d9d9" /></linearGradient>
    </defs>
    <path d="M.5.500h90l36 36v132H.5z" fill="url(#paper)" stroke="#a5a5a5" />
    <path d="M90.500.500v36h36z" fill="url(#curl)" stroke="#aaa" />
    <path d="M90 36.500h37" stroke="#8a8a8a" />
  </svg>
);
const WordDoc = () => (
  <svg width="59" height="58" viewBox="0 0 59 58" aria-hidden="true">
    <defs><linearGradient id="doc" x1="0" y1="0" x2="1" y2="1"><stop offset="0" stopColor="#fff" /><stop offset="1" stopColor="#bcd2f4" /></linearGradient></defs>
    <path d="M12 1h36l10 11v45H12z" fill="url(#doc)" stroke="#5a7ab0" />
    <path d="M48 1v11h10z" fill="#c9dbf5" stroke="#5a7ab0" />
    <path d="M28 16h9M28 20h9M28 24h9M28 28h9M28 32h9M17 37h34M17 41h34M17 45h34M17 49h28" stroke="#86a4d8" strokeWidth="1.500" />
    <path d="M40 15h11v12H40z" fill="#7fa3dd" />
    <rect x="1" y="7" width="26" height="26" fill="#3c66b8" stroke="#234a96" />
    <path d="M3.500 9.500h21v21h-21z" stroke="#a9c1ec" fill="none" />
    <text x="14" y="27" textAnchor="middle" fontSize="20" fontWeight="bold" fontStyle="italic" fill="#fff" fontFamily='"Liberation Serif", serif'>W</text>
  </svg>
);
const Installer = () => (
  <svg width="60" height="60" viewBox="0 0 60 60" aria-hidden="true">
    <path d="M25 1h31v25H25z" fill="#d4d4d4" stroke="#222" strokeWidth="2" />
    <path d="M30 5h21v17H30z" fill="#1bb0e8" stroke="#0a0a8a" strokeWidth="3" />
    <path d="M34 20L46 6h-8z" fill="#9fe6fa" />
    <path d="M24 27h35v9H24z" fill="#c4c4c4" stroke="#222" strokeWidth="2" />
    <path d="M1 22h14l8-6v36l-6 6H4V26H1z" fill="#d8d8d8" stroke="#333" strokeWidth="2" />
    <path d="M15 23l8-7v36l-8 6z" fill="#777" />
    <circle cx="33" cy="45" r="14" fill="#cfcfcf" stroke="#333" />
    <path d="M33 45L24 34a14 14 0 0 1 10-3z" fill="#e9ee7a" />
    <path d="M33 45l-14-3a14 14 0 0 1 5-8z" fill="#3cc8b8" />
    <path d="M33 45l8 11a14 14 0 0 1-9 3z" fill="#4fd3cf" />
    <circle cx="33" cy="45" r="3.500" fill="#fff" stroke="#222" strokeWidth="2" />
  </svg>
);
const ChromeLogo = () => (
  <svg width="178" height="178" viewBox="-89 -89 178 178" aria-hidden="true">
    <path d="M-74.400-48.800A89 89 0 0 1 79.500-40L0-40A40 40 0 0 0-34.600 20Z" fill="#db4437" />
    <path d="M79.500-40A89 89 0 0 1-5.100 88.800L34.600 20A40 40 0 0 0 0-40Z" fill="#ffcd40" />
    <path d="M-5.100 88.800A89 89 0 0 1-74.400-48.800L-34.600 20A40 40 0 0 0 34.600 20Z" fill="#17a05e" />
    <path d="M0-40h79.500L31-26z" fill="#d9a52f" opacity=".6" />
    <path d="M-34.600 20L-74.400-48.800-40-8z" fill="#8c2f25" opacity=".45" />
    <path d="M34.600 20L-5.100 88.800 8 38z" fill="#0b6b3c" opacity=".45" />
    <circle r="40" fill="#f1f1f1" />
    <circle r="32" fill="#4a8af4" />
  </svg>
);
const Stopwatch = () => (
  <svg width="27" height="26" viewBox="0 0 27 26" aria-hidden="true">
    <rect x="1" width="25" height="25" fill="#fafafa" stroke="#ddd" />
    <circle cx="13" cy="14" r="8.500" fill="#fff" stroke="#333" strokeWidth="1.600" /><circle cx="13" cy="14" r="6" fill="none" stroke="#999" strokeWidth=".8" />
    <path d="M13 9v5h4M13 5V2M10 2h6M5 7L4 5M21 7l2-2" stroke="#333" strokeWidth="1.400" fill="none" />
  </svg>
);

type TreeEntry = { t: string; icon: React.ReactNode; root?: boolean; pin?: boolean; on?: boolean; gap?: boolean };
const tree: TreeEntry[] = [
  { t: 'Quick access', root: true, icon: <G w={16}><path d="M8 1l2 4.500 5 .5-3.700 3.400L12.500 15 8 12l-4.500 3 1-5.500L1 6l5-.5z" fill="#2e9ae6" /></G> },
  { t: 'Desktop', pin: true, icon: <G w={16}><rect x="1" y="2" width="14" height="12" fill="#1e90f5" stroke="#0d62b5" /></G> },
  { t: 'Documents', pin: true, icon: <G w={16}><path d="M2 1h9l3 3v11H2z" fill="#f5f9fc" stroke="#7c8a96" /><path d="M4 5h6M4 8h8M4 11h8" stroke="#4a90c8" strokeWidth="1.400" /></G> },
  { t: 'Pictures', pin: true, icon: <G w={16}><rect x="1" y="2" width="14" height="12" fill="#e8f2fa" stroke="#8a99a5" /><path d="M2 4h12v5H2z" fill="#6fb4e8" /><path d="M2 11l4-3 4 2 4 1v2H2z" fill="#3d6478" /></G> },
  { t: 'Фотографії iCloud', pin: true, icon: <G w={16}><rect x=".5" y=".5" width="15" height="15" rx="3" fill="#fff" stroke="#ccc" /><circle cx="8" cy="5" r="2.400" fill="#f7941d" /><circle cx="11" cy="7" r="2.400" fill="#9bca3c" /><circle cx="10" cy="10.500" r="2.400" fill="#3aa6dd" /><circle cx="6" cy="10.500" r="2.400" fill="#9b59b6" /><circle cx="5" cy="7" r="2.400" fill="#ea4335" /></G> },
  { t: 'Проекти', pin: true, icon: <Folder /> },
  { t: 'This PC', pin: true, icon: <Monitor /> },
  { t: 'my-app', icon: <Folder /> },
  { t: 'word_training', icon: <Folder /> },
  { t: 'Австрія', icon: <Folder /> },
  { t: 'Відео', icon: <Folder /> },
  { t: 'OneDrive', root: true, gap: true, icon: <G w={16}><path d="M0 10c0-3 3-4 4-4 1-4 7-4 8 0 3 0 4 2 4 4s-1 3.500-3 3.500H3C1 13.500 0 12 0 10z" fill="#1680d8" /><path d="M4 6c1-4 7-4 8 0L6 9z" fill="#0b5cab" /></G> },
  { t: 'This PC', root: true, gap: true, on: true, icon: <Monitor /> },
  { t: 'Network', root: true, gap: true, icon: <G w={16}><path d="M6 1l8 1v8l-8 2z" fill="#4ab4f0" stroke="#2b7db5" strokeWidth=".6" /><circle cx="5" cy="9" r="4.500" fill="#3e8fcb" /><path d="M2 8c2-2 4 0 6-1M5 5v9" stroke="#b7def5" /></G> },
];

const tiles = [
  { t: 'mariadb-10.5.5-winx64', icon: <Installer />, framed: true },
  { t: 'perelik-dokumentiv-dlya-ur.osib-do\nnecka-obl_47', icon: <WordDoc />, framed: true },
  { t: '154099145787378', icon: <WordDoc />, framed: true },
  { t: 'd480611', icon: <ChromeLogo /> },
  { t: 'chronometer', icon: <Stopwatch />, low: true },
  { t: '000B40A2-4F5EF884-0001.pdf_tmp', icon: <BlankPage /> },
  { t: '000B40B1-4EF88D70-0001.pdf_tmp', icon: <BlankPage /> },
  { t: 'Recording_59349408766.m4a_tmp', icon: <BlankPage /> },
  { t: 'Recording_67486307224.m4a_tmp', icon: <BlankPage /> },
  { t: 'Баобаб.docx_tmp', icon: <BlankPage /> },
];
const folders = [
  ['2)Лютий', '3/16/2020 12:38 PM'],
  ['3)Березень', '4/11/2020 3:24 AM'],
  ['4)Квітень', '5/16/2020 12:23 AM'],
  ['5) Травень', '6/13/2020 12:35 PM'],
  ['6) Червень', '8/26/2020 11:48 PM'],
  ['7) Липень', '8/27/2020 6:03 PM'],
  ['8) Серпень', '9/19/2020 11:53 AM'],
  ['9) Вересень', '10/14/2020 2:48 PM'],
];

const ExplorerRibbon = ({ archive }: { archive?: boolean }) => (
  <Ribbon>
    <RibbonGroup $w={262}>
      <GroupRow>
        <BigButton $w={74} $off={archive}><G w={24} h={30} box="0 0 24 30"><path d="M13 5l8 6-3 1-3 6v4l-5-4-8 8 6-10-5-3 4-2 5-3z" fill={archive ? '#a9b4c4' : '#8a949e'} /></G><span>Pin to Quick<br />access</span></BigButton>
        <BigButton $w={36}><G w={26} h={30} box="0 0 26 30"><path d="M1 1h12l3 4v18H1z" fill="#fff" stroke="#9aa5ae" /><path d="M3 7h10M3 11h10M3 15h10" stroke="#6fa5d8" /><path d="M9 7h12l4 4v18H9z" fill="#fff" stroke="#9aa5ae" /><path d="M12 14h10M12 18h10M12 22h10M12 25h10" stroke="#6fa5d8" strokeWidth="1.400" /></G>Copy</BigButton>
        <BigButton $w={45} $off><G w={24} h={30} box="0 0 24 30"><rect x="1" y="3" width="22" height="26" rx="2" fill="#8ea4c4" /><path d="M4 7h16v19H4z" fill="#eef3f9" /><path d="M4 11h16M4 15h16M4 19h16" stroke="#c5d3e4" /><path d="M7 5h3V1h4v4h3v3H7z" fill="#6c7f9b" /></G>Paste</BigButton>
        <SmallList>
          <SmallButton><G w={15}><path d="M5 1l5 9M11 1L6 10" stroke="#7d8b97" strokeWidth="1.400" /><circle cx="4.500" cy="12.500" r="2.300" stroke="#2f86d6" strokeWidth="1.700" /><circle cx="11.500" cy="12.500" r="2.300" stroke="#2f86d6" strokeWidth="1.700" /></G>Cut</SmallButton>
          <SmallButton><G w={15}><rect x=".5" y="3" width="15" height="10" fill="#d8ecfa" stroke="#6a9cc4" /><path d="M2 5l2 6 2-5 2 5M10 10h1M12 10h1" stroke="#1e4a78" /></G>Copy path</SmallButton>
          <SmallButton $off><G w={15}><rect x="2" y="2" width="12" height="13" fill="#9db2cf" /><rect x="4" y="4" width="8" height="9" fill="#eef3f9" /><path d="M6 11c0-3 1-4 4-4M8 5l2.500 2L8 9" stroke="#5b7ba5" /></G>Paste shortcut</SmallButton>
        </SmallList>
      </GroupRow>
      <GroupName>Clipboard</GroupName>
    </RibbonGroup>
    <RibbonGroup $w={191}>
      <GroupRow>
        <BigButton $w={44}><G w={28} h={30} box="0 0 28 30"><path d="M2 1h22v27H2z" fill="#fbe08d" /><path d="M2 1h5l3 2v25H2z" fill="#f6d271" /><path d="M28 20h-8v-6l-8 8 8 8v-6h8z" fill="#2f86d6" /></G><span>Move<br />to <InlineCaret /></span></BigButton>
        <BigButton $w={40}><G w={28} h={30} box="0 0 28 30"><path d="M2 3h22v26H2z" fill="#fbe08d" /><path d="M12 .5h10l4 4v14H12z" fill="#fff" stroke="#9aa5ae" /><path d="M14 7h10M14 10h10M14 13h10" stroke="#4a90d0" strokeWidth="1.400" /></G><span>Copy<br />to <InlineCaret /></span></BigButton>
        <Divider />
        <BigButton $w={48}><G w={26} h={30} box="0 0 26 30"><path d="M2 5l5-2 6 8 6-8 4 2-7 10 8 10-4 3-7-9-7 9-4-3 8-10z" fill="#d5121c" /></G>Delete<Caret /></BigButton>
        <BigButton $w={42}><G w={28} h={30} box="0 0 28 30"><rect x="1" y="9" width="26" height="12" fill="#fff" stroke="#9aa5ae" /><path d="M3 11h14v8H3z" fill="#2f86d6" /><path d="M17 2h3l2 2 2-2h3M22 4v22M17 28h3l2-2 2 2h3" stroke="#666" strokeWidth="1.600" /></G>Rename</BigButton>
      </GroupRow>
      <GroupName>Organize</GroupName>
    </RibbonGroup>
    <RibbonGroup $w={145}>
      <GroupRow>
        <BigButton $w={46}><G w={20} h={30} box="0 0 20 30"><path d="M1 3h18v24H6z" fill="#f7d576" /><path d="M1 2l9 5v22L1 24z" fill="#fbe69c" /></G><span>New<br />folder</span></BigButton>
        <SmallList>
          <SmallButton><SmallPages />New item <Caret /></SmallButton>
          <SmallButton><G w={15}><path d="M4 2h9v13H4z" fill="#fff" stroke="#7a97ad" /><path d="M1 5h4M1 2l3-1M1 8l3 1" stroke="#2f86d6" strokeWidth="1.600" /></G>Easy access <Caret /></SmallButton>
        </SmallList>
      </GroupRow>
      <GroupName>New</GroupName>
    </RibbonGroup>
    <RibbonGroup $w={133}>
      <GroupRow>
        <BigButton $w={60}><CheckDoc w={24} h={30} />Properties<Caret /></BigButton>
        <SmallList>
          <SmallButton>
            {archive
              ? <G w={15}><path d="M0 0h16v5H0z" fill="#8a2b7c" /><path d="M0 5h16v6H0z" fill="#2c5fb0" /><path d="M0 11h16v5H0z" fill="#2d8a3e" /><path d="M5 0h6v16H5z" fill="#d8a02c" /><path d="M6 5h4v5H6z" fill="#7a1f1f" /></G>
              : <G w={15}><path d="M1 1h8l2 2h4v8H1z" fill="#f2b929" /><path d="M1 5h14v10h-4v-4H5v4H1z" fill="#3f9be0" /></G>}
            Open <Caret />
          </SmallButton>
          <SmallButton $off><G w={15}><path d="M1 1h9l4 4v10H1z" fill="#e9f0f7" stroke="#9fb3c8" /><path d="M4 13L14 3" stroke="#7f9fc5" strokeWidth="2" /></G>Edit</SmallButton>
          <SmallButton><G w={15}><path d="M1 1h9v13H1z" fill="#f7d576" /><circle cx="10.500" cy="11" r="4.500" fill="#dfe6e3" stroke="#5a6a60" /><path d="M10.500 8v3l2 1M5 13c1 2 3 3 5 3" stroke="#28a03c" strokeWidth="1.600" /></G>History</SmallButton>
        </SmallList>
      </GroupRow>
      <GroupName>Open</GroupName>
    </RibbonGroup>
    <RibbonGroup $w={115}>
      <SmallList $pad={6}>
        <SmallButton><G w={15}><path d="M1 1h6v6H1zM9 1h6v6H9zM1 9h6v6H1zM9 9h6v6H9z" fill="#a9d8f8" stroke="#2f86d6" strokeWidth="1.200" /></G>Select all</SmallButton>
        <SmallButton><G w={15}><path d="M1 1h6v6H1zM9 1h6v6H9zM1 9h6v6H1zM9 9h6v6H9z" fill="#fff" stroke="#aaa" /></G>Select none</SmallButton>
        <SmallButton><G w={15}><path d="M1 1h6v6H1zM9 9h6v6H9z" fill="#fff" stroke="#aaa" /><path d="M9 1h6v6H9zM1 9h6v6H1z" fill="#a9d8f8" stroke="#2f86d6" strokeWidth="1.200" /></G>Invert selection</SmallButton>
      </SmallList>
      <GroupName>Select</GroupName>
    </RibbonGroup>
  </Ribbon>
);
const TabSpace = styled.span`
  width: 1px;
`;

type ExplorerProps = { title: string; path: string[]; archive?: boolean; status: string[]; children: React.ReactNode };
const Explorer = ({ title, path, archive, status, children }: ExplorerProps) => {
  const nav = archive ? '#cfcfcf' : '#555';
  return (
    <Win aria-label={title}>
      <TitleBar>
        <QuickTools>
          {archive ? <DownArrow /> : <Folder />}<Rule /><CheckDoc /><Folder />
          <G w={9} box="0 0 9 9"><path d="M1 1h7" stroke="#111" strokeWidth="1.300" /><path d="M1 4h7L4.500 8z" fill="#111" /></G><Rule />
        </QuickTools>
        {archive && <ContextTab>Extract</ContextTab>}
        <WinTitle $wide={archive}>{title}</WinTitle>
        <WinButton aria-label="Minimize"><G w={10} box="0 0 10 10"><path d="M0 5.500h10" stroke="#888" /></G></WinButton>
        <WinButton aria-label="Maximize"><G w={10} box="0 0 10 10"><path d="M.5.500h9v9h-9z" stroke="#888" /></G></WinButton>
        <WinButton aria-label="Close"><Cross s={10} c="#888" t={1.2} /></WinButton>
      </TitleBar>
      <RibbonTabs>
        <RibbonTab $w={56} $kind="file">File</RibbonTab>
        <RibbonTab $w={58} $kind="on">Home</RibbonTab>
        <RibbonTab $w={58}>Share</RibbonTab>
        <RibbonTab $w={56}>View</RibbonTab>
        {archive && <><TabSpace /><ToolsTab $w={159}>Compressed Folder Tools</ToolsTab></>}
        <RibbonSide>
          <button aria-label="Collapse ribbon"><G w={9} box="0 0 9 9"><path d="M1 6.500L4.500 3 8 6.500" stroke="#888" strokeWidth="1.300" /></G></button>
          <HelpDot aria-label="Help">?</HelpDot>
        </RibbonSide>
      </RibbonTabs>
      <ExplorerRibbon archive={archive} />
      <AddressRow>
        <NavButton $w={20} aria-label="Back"><G w={14}><path d="M15 8H1M7 2L1 8l6 6" stroke={nav} strokeWidth="1.600" /></G></NavButton>
        <NavButton $w={36} aria-label="Forward"><G w={14}><path d="M1 8h14M9 2l6 6-6 6" stroke={nav} strokeWidth="1.600" /></G></NavButton>
        <NavButton $w={14} aria-label="Recent"><Tick c={nav} /></NavButton>
        <NavButton $w={26} aria-label="Up"><G w={14}><path d="M8 15V1M2 7l6-6 6 6" stroke="#555" strokeWidth="1.600" /></G></NavButton>
        <Crumbs>
          {archive ? <DownArrow /> : <Folder />}
          {path.map(p => <React.Fragment key={p}><Sep /><a href="#path">{p}</a></React.Fragment>)}
          {archive && <Sep />}
          <CrumbEnd>
            <CrumbButton aria-label="Previous locations"><Tick /></CrumbButton>
            <CrumbButton $ruled aria-label="Refresh"><G w={12}><path d="M12 4A6 6 0 1 0 14 9" stroke="#555" strokeWidth="1.700" /><path d="M8 5h5V0" stroke="#555" strokeWidth="1.600" /></G></CrumbButton>
          </CrumbEnd>
        </Crumbs>
        <FindBox>
          <G w={13}><circle cx="9.500" cy="6" r="5" stroke="#666" strokeWidth="1.300" /><path d="M6 9.500L1 15" stroke="#666" strokeWidth="1.300" /></G>
          <input placeholder={`Search ${title}`} aria-label={`Search ${title}`} />
        </FindBox>
      </AddressRow>
      <Body>
        <Tree>
          {tree.map((e, i) => (
            <TreeItem key={i} href="#node" $root={e.root} $on={e.on} $gap={e.gap}>
              {e.icon}{e.t}{e.pin && <FaThumbtack size={11} color="#8a949e" transform="rotate(35)" />}
            </TreeItem>
          ))}
        </Tree>
        <Pane>{children}</Pane>
        {archive && (
          <ExplorerScroll>
            <G w={9} box="0 0 9 9"><path d="M1 6.500L4.500 3 8 6.500" stroke="#444" strokeWidth="1.700" /></G>
            <ExplorerThumb />
            <G w={9} box="0 0 9 9"><path d="M1 2.500L4.500 6 8 2.500" stroke="#444" strokeWidth="1.700" /></G>
          </ExplorerScroll>
        )}
      </Body>
      <StatusBar>
        {status.map(s => <span key={s}>{s}</span>)}
        <ViewSwitch>
          <ViewButton $on={!archive} aria-label="Details"><G w={16}><path d="M1 1h4v14H1zM1 6h4M1 10h4" stroke="#777" /><path d="M7 3.500h3M12 3.500h3M7 8h3M12 8h3M7 12.500h3M12 12.500h3" stroke="#777" strokeWidth="1.300" /></G></ViewButton>
          <ViewButton aria-label="Large icons"><G w={14}><rect x=".7" y=".7" width="14.600" height="14.600" fill="#fff" stroke="#777" strokeWidth="1.200" /><path d="M3 4h10v4H3z" fill="#8cc4ea" /><path d="M3 11l3-4 3 2 4-1v4H3z" fill="#3b6a86" /></G></ViewButton>
        </ViewSwitch>
      </StatusBar>
    </Win>
  );
};

export default function App() {
  return (
    <>
      <GlobalStyle />
      <Desktop>
        <Chrome />
        <Explorer title="Downloads" archive path={['This PC', 'main data (C:)', 'Users', 'vital', 'Downloads']} status={['17 items', '1 item selected', '428 KB']}>
          <Tiles>
            {tiles.map(t => (
              <Tile key={t.t}><Preview $framed={t.framed} $low={t.low}>{t.icon}</Preview>{t.t}</Tile>
            ))}
          </Tiles>
        </Explorer>
        <Explorer title="2020 рік" path={['This PC', 'main data (C:)', 'Банківські операції', 'Комунальні послуги', 'Вінниця', '2020 рік']} status={['8 items', '1 item selected']}>
          <Files>
            <colgroup><col width="258" /><col width="143" /><col width="120" /><col width="81" /></colgroup>
            <thead>
              <tr>
                <th><NameHead>Name<SortMark><G w={9} h={5} box="0 0 9 5"><path d="M1 4.500L4.500 1 8 4.500" stroke="#666" /></G></SortMark></NameHead></th>
                <th>Date modified</th><th>Type</th><th>Size</th>
              </tr>
            </thead>
            <tbody>
              {folders.map(([n, d], i) => (
                <FileRow key={n} $on={i === 7}>
                  <td><FileName><Folder s={15} />{n}</FileName></td><td>{d}</td><td>File folder</td><td />
                </FileRow>
              ))}
            </tbody>
          </Files>
        </Explorer>
      </Desktop>
    </>
  );
}
